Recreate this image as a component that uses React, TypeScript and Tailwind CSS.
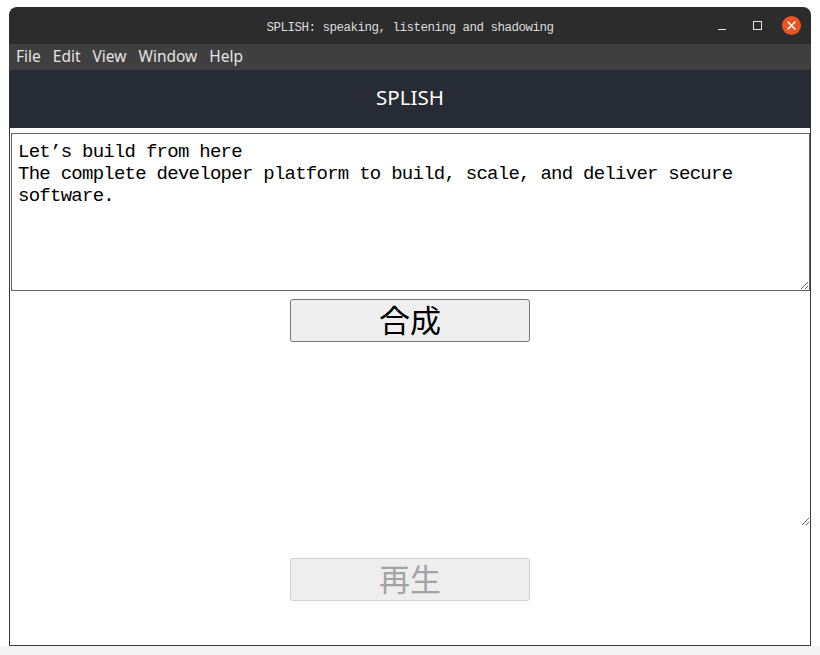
// SPLISH デスクトップウィンドウの再現
import { useState } from "react";

const MENUS = ["File", "Edit", "View", "Window", "Help"];

const INITIAL_TEXT =
  "Let’s build from here\nThe complete developer platform to build, scale, and deliver secure software.";

export default function App() {
  const [text, setText] = useState(INITIAL_TEXT);
  const [result, setResult] = useState("");

  return (
    <div className="h-[655px] w-[820px] overflow-hidden bg-white pt-[7px]">
      <div className="ml-[9px] flex h-[639px] w-[802px] flex-col">
        {/* タイトルバー */}
        <div className="relative flex h-[37px] shrink-0 items-center justify-center rounded-t-[8px] bg-[#2c2c2c] pt-[6px]">
          <span className="font-['Liberation_Mono',monospace] text-[12.5px] tracking-[-0.5px] text-[#dcdcdc]">
            SPLISH: speaking, listening and shadowing
          </span>
          <div className="absolute right-[10px] top-0 flex h-full items-center">
            <span className="mt-[8px] block h-[1.5px] w-[8px] bg-[#e6e6e6]" />
            <span className="ml-[27px] block h-[9px] w-[9px] border-[1.5px] border-[#e6e6e6]" />
            <span className="ml-[20px] flex h-[19px] w-[19px] items-center justify-center rounded-full bg-[#e95420]">
              <svg width="9" height="9" viewBox="0 0 9 9">
                <path d="M1 1L8 8M8 1L1 8" stroke="#fff" strokeWidth="1.5" strokeLinecap="round" />
              </svg>
            </span>
          </div>
        </div>

        {/* メニューバー */}
        <div className="flex h-[26px] shrink-0 items-center gap-[12px] bg-[#3f3f3f] pb-[1px] pl-[7px] font-['Noto_Sans',sans-serif] text-[15.5px] leading-none text-[#e4e4e4]">
          {MENUS.map((m) => (
            <span key={m}>{m}</span>
          ))}
        </div>

        {/* ヘッダー */}
        <div className="flex h-[58px] shrink-0 items-center justify-center bg-[#272b33] pb-[3px] font-['Noto_Sans',sans-serif] text-[20.5px] text-white">
          SPLISH
        </div>

        {/* 本体 */}
        <div className="flex flex-1 flex-col items-center border-x border-b border-[#3a3a3a] bg-white">
          <textarea
            value={text}
            onChange={(e) => setText(e.target.value)}
            className="mt-[5px] ml-px h-[158px] w-[799px] self-start border border-[#606060] px-[6px] pt-[7px] font-['Liberation_Mono',monospace] text-[19px] leading-[22px] tracking-[-0.74px] text-black outline-none"
          />
          <button
            type="button"
            onClick={() => setResult(text)}
            className="mt-[8px] h-[43px] w-[240px] rounded-[3px] border border-[#767676] bg-[#efefef] pb-[4px] font-['Noto_Sans_CJK_JP',sans-serif] text-[31px] leading-none text-black"
          >
            合成
          </button>
          <textarea
            value={result}
            onChange={(e) => setResult(e.target.value)}
            className="mt-[8px] ml-px h-[176px] w-[799px] self-start border-0 bg-white outline-none"
          />
          <button
            type="button"
            disabled
            className="mt-[32px] h-[43px] w-[240px] rounded-[3px] border border-[#cfcfcf] bg-[#eeeeee] pb-[4px] font-['Noto_Sans_CJK_JP',sans-serif] text-[31px] leading-none text-[#a3a3a3]"
          >
            再生
          </button>
        </div>
      </div>
      <div className="h-[9px] bg-[#f4f4f4]" />
    </div>
  );
}
